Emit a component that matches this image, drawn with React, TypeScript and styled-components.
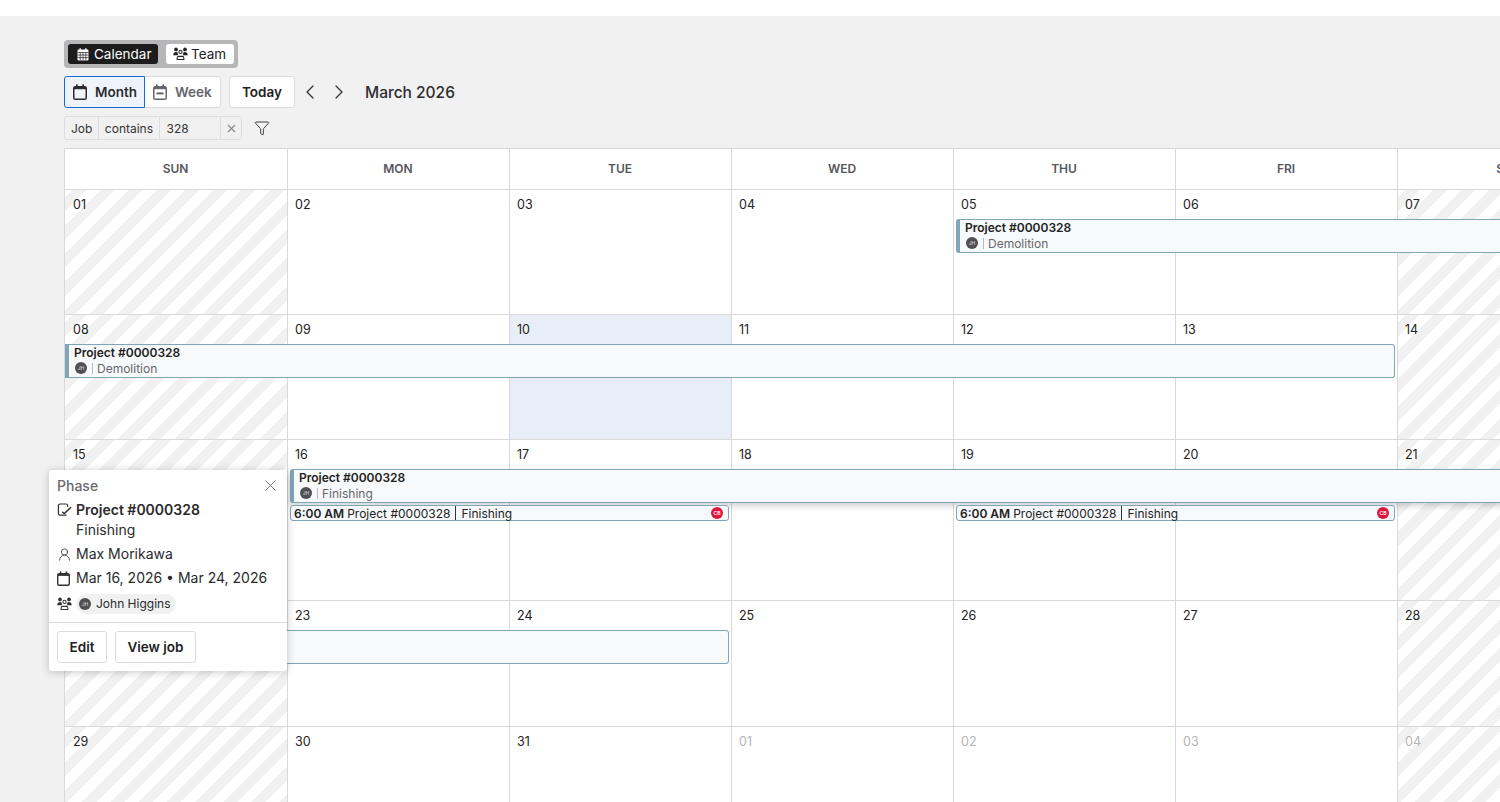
import React from "react";
import styled, { createGlobalStyle } from "styled-components";
import { ChevronLeft, ChevronRight, Funnel, X, UserRound } from "lucide-react";

const Global = createGlobalStyle`
  html, body { margin: 0; padding: 0; height: 100%; overflow: hidden; background: #f1f1f1; }
  body { font-family: Inter, "Liberation Sans", sans-serif; color: #1c1c1e; }
  * { box-sizing: border-box; }
`;

const Page = styled.div`
  position: relative;
  width: 1500px;
  height: 802px;
  overflow: hidden;
  background: #f1f1f1;
`;
const TopBar = styled.div`
  height: 16px;
  background: #fff;
`;
const Content = styled.main`
  padding: 24px 0 0 64px;
  display: flex;
  flex-direction: column;
  align-items: flex-start;
`;
const Segmented = styled.div`
  display: flex;
  gap: 8px;
  padding: 4px;
  height: 28px;
  width: 174px;
  background: #b6b6b8;
  border-radius: 4px;
`;
const Segment = styled.button<{ $active?: boolean }>`
  display: flex;
  align-items: center;
  gap: ${(p) => (p.$active ? "5px" : "3px")};
  height: 20px;
  width: ${(p) => (p.$active ? "90px" : "68px")};
  flex: none;
  border: 0;
  border-radius: 3px;
  padding: 0 0 0 ${(p) => (p.$active ? "9px" : "7px")};
  font: 400 13.5px Inter, sans-serif;
  white-space: nowrap;
  background: ${(p) => (p.$active ? "#1c1c1c" : "#fff")};
  color: ${(p) => (p.$active ? "#fff" : "#222")};
  svg { flex: none; }
`;
const Toolbar = styled.div`
  display: flex;
  align-items: center;
  margin-top: 8px;
  height: 32px;
`;
const ViewButton = styled.button<{ $active?: boolean; $first?: boolean }>`
  display: flex;
  align-items: center;
  gap: 8px;
  height: 32px;
  padding: 0 0 0 8px;
  width: ${(p) => (p.$first ? "81px" : "76px")};
  font: 600 13.5px Inter, sans-serif;
  border: 1px solid ${(p) => (p.$active ? "#1769d8" : "#dcdce0")};
  border-left-width: ${(p) => (p.$first ? "1px" : "0")};
  border-radius: ${(p) => (p.$first ? "3px 0 0 3px" : "0 3px 3px 0")};
  background: ${(p) => (p.$active ? "#eff4fb" : "#fff")};
  color: ${(p) => (p.$active ? "#2b2b2e" : "#66666a")};
`;
const TodayButton = styled.button`
  margin-left: 8px;
  width: 66px;
  height: 32px;
  background: #fff;
  border: 1px solid #dcdce0;
  border-radius: 3px;
  font: 600 13.5px Inter, sans-serif;
  color: #222;
`;
const NavButton = styled.button`
  display: flex;
  align-items: center;
  justify-content: center;
  width: 29px;
  height: 32px;
  padding: 0;
  background: none;
  border: 0;
  color: #333;
`;
const NavGroup = styled.div`
  display: flex;
`;
const MonthTitle = styled.h1`
  margin: 0 0 0 12px;
  font: 500 15.5px Inter, sans-serif;
  color: #2c2c2e;
`;
const FilterRow = styled.div`
  display: flex;
  align-items: center;
  margin-top: 8px;
  height: 24px;
`;
const FilterChip = styled.div`
  display: flex;
  height: 24px;
  width: 178px;
  border: 1px solid #dcdce0;
  border-radius: 3px;
  overflow: hidden;
  font: 400 12px Inter, sans-serif;
  color: #333;
`;
const FilterPart = styled.span<{ $w: number; $center?: boolean }>`
  display: flex;
  align-items: center;
  justify-content: ${(p) => (p.$center ? "center" : "flex-start")};
  width: ${(p) => p.$w}px;
  padding-left: ${(p) => (p.$center ? "0" : "6px")};
  border-right: 1px solid #dcdce0;
  &:last-child { border-right: 0; }
`;
const FilterIcon = styled.span`
  display: flex;
  margin-left: 12px;
  color: #333;
`;
const Calendar = styled.section`
  margin-top: 8px;
  width: 1556px;
  border-left: 1px solid #d9d9d9;
  border-top: 1px solid #d9d9d9;
  background: #fff;
`;
const HeaderRow = styled.div`
  display: grid;
  grid-template-columns: repeat(7, 222px);
  height: 40px;
`;
const DayName = styled.div<{ $first?: boolean }>`
  display: flex;
  align-items: center;
  justify-content: center;
  padding: 0 1px 2px 0;
  font: 600 12px Inter, sans-serif;
  color: #56565a;
  border-left: ${(p) => (p.$first ? "0" : "1px solid #d9d9d9")};
`;
const Week = styled.div<{ $h: number }>`
  display: grid;
  grid-template-columns: repeat(7, 222px);
  grid-template-rows: 30px 34px auto 1fr;
  height: ${(p) => p.$h}px;
`;
const Cell = styled.div<{ $col: number; $off?: boolean; $today?: boolean }>`
  grid-row: 1 / 5;
  grid-column: ${(p) => p.$col};
  padding: 7px 0 0 ${(p) => (p.$col === 1 ? 8 : 7)}px;
  border-top: 1px solid #d9d9d9;
  border-left: ${(p) => (p.$col === 1 ? "0" : "1px solid #d9d9d9")};
  font: 400 12.5px/15px Inter, sans-serif;
  color: #222;
  background: ${(p) =>
    p.$today
      ? "#e8eef8"
      : p.$off
      ? "repeating-linear-gradient(135deg, #fff 0 5px, #f1f1f1 5px 15px, #fff 15px 20px)"
      : "#fff"};
`;
const DateLabel = styled.span<{ $muted?: boolean }>`
  color: ${(p) => (p.$muted ? "#b4b4b6" : "#222")};
`;
const Bar = styled.div<{ $from: number; $to: number; $flat?: boolean; $ml: number; $mr: number; $raised?: boolean }>`
  grid-row: 2;
  grid-column: ${(p) => p.$from} / ${(p) => p.$to};
  z-index: 1;
  min-width: 0;
  margin-left: ${(p) => p.$ml}px;
  margin-right: ${(p) => p.$mr}px;
  height: 34px;
  padding: 0 0 0 5px;
  background: #f8f9fb;
  border: 1px solid #7ea6b8;
  border-left: 4px solid #7ea6b8;
  border-radius: ${(p) => (p.$flat ? "0 3px 3px 0" : "3px")};
  box-shadow: ${(p) => (p.$raised ? "0 3px 6px rgba(0,0,0,.18)" : "none")};
  overflow: hidden;
`;
const BarTitle = styled.div`
  font: 600 12px/15px Inter, sans-serif;
  color: #222;
`;
const BarSub = styled.div`
  display: flex;
  align-items: center;
  height: 16px;
  padding-left: 1px;
  font: 400 12px Inter, sans-serif;
  color: #66666a;
`;
const Avatar = styled.span<{ $size?: number; $red?: boolean }>`
  display: inline-flex;
  align-items: center;
  justify-content: center;
  flex: none;
  width: ${(p) => p.$size ?? 12}px;
  height: ${(p) => p.$size ?? 12}px;
  border-radius: 50%;
  background: ${(p) => (p.$red ? "#e0163a" : "#505052")};
  color: ${(p) => (p.$red ? "#fff" : "#c4c4c4")};
  font: 600 5px Inter, sans-serif;
`;
const BarDivider = styled.span`
  width: 1px;
  height: 11px;
  margin: 0 4px 0 5px;
  background: #b9b9bd;
`;
const Timed = styled.div<{ $from: number; $to: number }>`
  grid-row: 3;
  grid-column: ${(p) => p.$from} / ${(p) => p.$to};
  z-index: 1;
  display: flex;
  align-items: center;
  margin: 2px 2px 0 3px;
  height: 16px;
  padding: 0 5px 0 3px;
  background: #f8f9fb;
  border: 1px solid #7ea6b8;
  border-radius: 3px;
  font: 400 12px Inter, sans-serif;
  color: #222;
  white-space: nowrap;
`;
const TimedTime = styled.strong`
  font-weight: 600;
  margin-right: 3px;
`;
const TimedDivider = styled.span`
  width: 1px;
  height: 14px;
  margin: 0 5px;
  background: #333;
`;
const TimedEnd = styled.span`
  display: flex;
  margin-left: auto;
`;
const Popover = styled.aside`
  position: absolute;
  z-index: 5;
  left: 49px;
  top: 470px;
  width: 238px;
  height: 201px;
  background: #fff;
  border-radius: 3px;
  box-shadow: 0 1px 8px rgba(0, 0, 0, 0.22);
  display: flex;
  flex-direction: column;
  font: 400 14px Inter, sans-serif;
  color: #2a2a2c;
`;
const PopBody = styled.div`
  flex: 1;
  padding: 6px 8px 0 8px;
  display: flex;
  flex-direction: column;
`;
const PopHead = styled.div`
  display: flex;
  align-items: center;
  justify-content: space-between;
  height: 18px;
  margin-right: -1px;
  font: 500 14px Inter, sans-serif;
  color: #6a6a6e;
`;
const PopRow = styled.div<{ $mt: number }>`
  display: grid;
  grid-template-columns: 19px 1fr;
  align-items: center;
  margin-top: ${(p) => p.$mt}px;
  line-height: 18px;
  white-space: nowrap;
`;
const PopIcon = styled.span`
  display: flex;
  color: #333;
`;
const PopTitle = styled.strong`
  font-weight: 600;
`;
const PopSub = styled.div`
  grid-column: 2;
  line-height: 22px;
`;
const Person = styled.span`
  display: inline-flex;
  align-items: center;
  gap: 5px;
  height: 20px;
  width: 100px;
  padding: 0 3px;
  background: #f1f1f1;
  border-radius: 10px;
  font-size: 12px;
  justify-self: start;
`;
const PopFooter = styled.div`
  display: flex;
  gap: 8px;
  height: 49px;
  padding: 8px;
  border-top: 1px solid #dcdce0;
`;
const PopButton = styled.button<{ $w: number }>`
  width: ${(p) => p.$w}px;
  height: 32px;
  background: #fff;
  border: 1px solid #dcdce0;
  border-radius: 3px;
  font: 600 13.5px Inter, sans-serif;
  color: #222;
`;

const CalIcon = ({ w = 14, h = 16, dash = false }: { w?: number; h?: number; dash?: boolean }) => (
  <svg width={w} height={h} viewBox="0 0 14 16" fill="none" aria-hidden>
    <rect x="0.75" y="2.75" width="12.5" height="12.5" rx="1.6" stroke="currentColor" strokeWidth="1.5" />
    <rect x="1" y="3" width="12" height="2.2" fill="currentColor" />
    <rect x="3" y="0.4" width="1.7" height="3.2" fill="currentColor" />
    <rect x="9.3" y="0.4" width="1.7" height="3.2" fill="currentColor" />
    {dash && <rect x="3.4" y="8.4" width="7.2" height="2" fill="currentColor" />}
  </svg>
);
const GridCal = () => (
  <svg width="12" height="13" viewBox="0 0 12 13" fill="none" aria-hidden>
    <rect x="0.5" y="1.6" width="11" height="10.9" rx="1.2" fill="currentColor" />
    <rect x="2.5" y="0.2" width="1.3" height="2.2" fill="currentColor" />
    <rect x="8.2" y="0.2" width="1.3" height="2.2" fill="currentColor" />
    <path d="M0.5 4.5h11M0.5 7h11M0.5 9.6h11M3.2 4.5v8M6 4.5v8M8.8 4.5v8" stroke="#1c1c1c" strokeWidth="0.7" />
  </svg>
);
const GroupIcon = ({ w = 15 }: { w?: number }) => (
  <svg width={w} height={w * 0.875} viewBox="0 0 16 14" fill="none" aria-hidden>
    <circle cx="3.2" cy="2.6" r="2" fill="currentColor" />
    <circle cx="12.8" cy="2.6" r="2" fill="currentColor" />
    <circle cx="8" cy="5.2" r="1.7" stroke="currentColor" strokeWidth="1.1" />
    <path d="M0.3 8.8C0.3 6.6 1.6 5.4 3.4 5.4c.8 0 1.3.2 1.8.6-.3 1.1 0 2 .6 2.8z" fill="currentColor" />
    <path d="M15.7 8.8c0-2.2-1.3-3.4-3.1-3.4-.8 0-1.3.2-1.8.6.3 1.1 0 2-.6 2.8z" fill="currentColor" />
    <path d="M4.4 13.3v-1.5c0-1 .8-1.8 1.8-1.8h3.6c1 0 1.8.8 1.8 1.8v1.5z" stroke="currentColor" strokeWidth="1.1" />
  </svg>
);
const PhaseIcon = () => (
  <svg width="15" height="14" viewBox="0 0 15 14" fill="none" aria-hidden>
    <path d="M9.5 12.2H3a1.6 1.6 0 0 1-1.6-1.6V2.6A1.6 1.6 0 0 1 3 1h6a1.6 1.6 0 0 1 1.6 1.6V4" stroke="currentColor" strokeWidth="1.2" />
    <path d="M5.2 8.8l2.1 1.7 6.7-6.2" stroke="currentColor" strokeWidth="1.5" />
  </svg>
);

const ProjectBar = ({
  from, to, ml, mr, label, flat, raised,
}: { from: number; to: number; ml: number; mr: number; label?: string; flat?: boolean; raised?: boolean }) => (
  <Bar $from={from} $to={to} $ml={ml} $mr={mr} $flat={flat} $raised={raised}>
    {label && (
      <>
        <BarTitle>Project #0000328</BarTitle>
        <BarSub>
          <Avatar>JH</Avatar>
          <BarDivider />
          {label}
        </BarSub>
      </>
    )}
  </Bar>
);

const TimedEvent = ({ from, to }: { from: number; to: number }) => (
  <Timed $from={from} $to={to}>
    <TimedTime>6:00 AM</TimedTime>
    Project #0000328
    <TimedDivider />
    Finishing
    <TimedEnd>
      <Avatar $red>CB</Avatar>
    </TimedEnd>
  </Timed>
);

const weeks: { h: number; days: string[]; mutedFrom?: number; today?: number; content?: React.ReactNode }[] = [
  {
    h: 125,
    days: ["01", "02", "03", "04", "05", "06", "07"],
    content: <ProjectBar from={5} to={8} ml={3} mr={-10} label="Demolition" />,
  },
  {
    h: 125,
    days: ["08", "09", "10", "11", "12", "13", "14"],
    today: 2,
    content: <ProjectBar from={1} to={7} ml={0} mr={2} label="Demolition" flat />,
  },
  {
    h: 161,
    days: ["15", "16", "17", "18", "19", "20", "21"],
    content: (
      <>
        <ProjectBar from={2} to={8} ml={3} mr={-10} label="Finishing" raised />
        <TimedEvent from={2} to={4} />
        <TimedEvent from={5} to={7} />
      </>
    ),
  },
  {
    h: 126,
    days: ["22", "23", "24", "25", "26", "27", "28"],
    content: <ProjectBar from={1} to={4} ml={0} mr={2} flat />,
  },
  {
    h: 125,
    days: ["29", "30", "31", "01", "02", "03", "04"],
    mutedFrom: 3,
  },
];

export default function App() {
  return (
    <Page>
      <Global />
      <TopBar />
      <Content>
        <Segmented>
          <Segment $active><GridCal /><span>Calendar</span></Segment>
          <Segment><GroupIcon /><span>Team</span></Segment>
        </Segmented>
        <Toolbar>
          <ViewButton $active $first><CalIcon /> Month</ViewButton>
          <ViewButton><CalIcon dash /> Week</ViewButton>
          <TodayButton>Today</TodayButton>
          <NavGroup>
            <NavButton aria-label="Previous"><ChevronLeft size={24} strokeWidth={1.3} /></NavButton>
            <NavButton aria-label="Next"><ChevronRight size={24} strokeWidth={1.3} /></NavButton>
          </NavGroup>
          <MonthTitle>March 2026</MonthTitle>
        </Toolbar>
        <FilterRow>
          <FilterChip>
            <FilterPart $w={34}>Job</FilterPart>
            <FilterPart $w={62}>contains</FilterPart>
            <FilterPart $w={61}>328</FilterPart>
            <FilterPart $w={20} $center><X size={13} color="#888" /></FilterPart>
          </FilterChip>
          <FilterIcon><Funnel size={16} strokeWidth={1.4} /></FilterIcon>
        </FilterRow>
        <Calendar>
          <HeaderRow>
            {["SUN", "MON", "TUE", "WED", "THU", "FRI", "SAT"].map((d, i) => (
              <DayName key={d} $first={i === 0}>{d}</DayName>
            ))}
          </HeaderRow>
          {weeks.map((w, wi) => (
            <Week key={wi} $h={w.h}>
              {w.days.map((d, i) => (
                <Cell key={i} $col={i + 1} $off={i === 0 || i === 6} $today={w.today === i}>
                  <DateLabel $muted={w.mutedFrom !== undefined && i >= w.mutedFrom}>{d}</DateLabel>
                </Cell>
              ))}
              {w.content}
            </Week>
          ))}
        </Calendar>
      </Content>
      <Popover>
        <PopBody>
          <PopHead>
            Phase
            <X size={19} strokeWidth={1.1} color="#666" />
          </PopHead>
          <PopRow $mt={7}>
            <PopIcon><PhaseIcon /></PopIcon>
            <PopTitle>Project #0000328</PopTitle>
            <PopSub>Finishing</PopSub>
          </PopRow>
          <PopRow $mt={4}>
            <PopIcon><UserRound size={15} strokeWidth={1.3} /></PopIcon>
            Max Morikawa
          </PopRow>
          <PopRow $mt={6}>
            <PopIcon><CalIcon w={13} h={15} /></PopIcon>
            Mar 16, 2026 • Mar 24, 2026
          </PopRow>
          <PopRow $mt={7}>
            <PopIcon><GroupIcon /></PopIcon>
            <Person><Avatar $size={12}>JH</Avatar>John Higgins</Person>
          </PopRow>
        </PopBody>
        <PopFooter>
          <PopButton $w={50}>Edit</PopButton>
          <PopButton $w={81}>View job</PopButton>
        </PopFooter>
      </Popover>
    </Page>
  );
}
